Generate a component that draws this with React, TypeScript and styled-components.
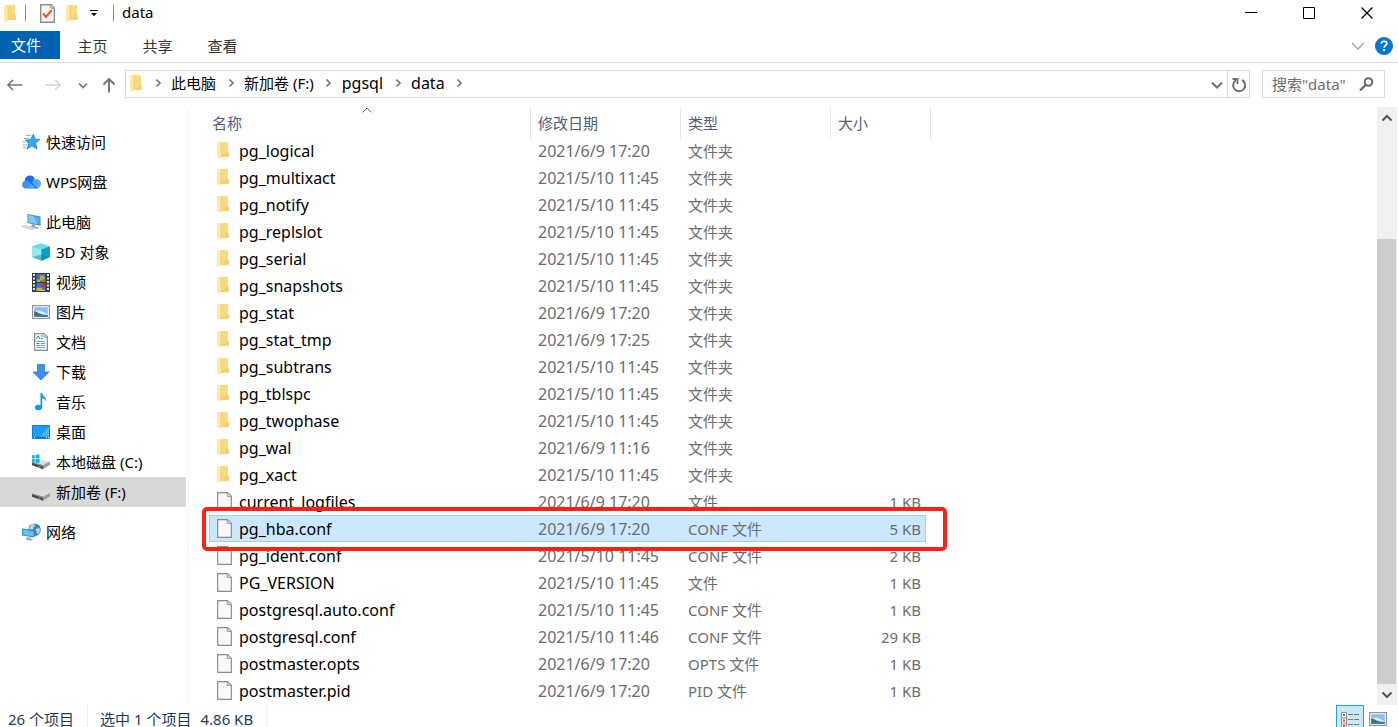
import React from "react";
import styled, { createGlobalStyle } from "styled-components";

const GlobalStyle = createGlobalStyle`
  * { box-sizing: border-box; }
  body {
    margin: 0;
    background: #fff;
    color: #000;
    font-family: "Noto Sans", "Noto Sans CJK SC", sans-serif;
    font-size: 15px;
    line-height: 20px;
    overflow: hidden;
  }
  button, input {
    font: inherit;
    color: inherit;
    background: none;
    border: 0;
    padding: 0;
    margin: 0;
  }
  a { color: inherit; text-decoration: none; }
  svg { display: block; flex: none; }
`;

const Window = styled.div`
  height: 100vh;
  display: flex;
  flex-direction: column;
`;

const TitleBar = styled.header`
  height: 31px;
  flex: none;
  display: flex;
  align-items: flex-start;
  padding-right: 2px;
`;

const QuickBar = styled.div`
  height: 26px;
  display: flex;
  align-items: center;
  padding-left: 4px;
`;

const QuickButton = styled.button<{ $width: number }>`
  width: ${(p) => p.$width}px;
  height: 24px;
  display: flex;
  align-items: center;
  justify-content: center;
`;

const BarDivider = styled.span`
  width: 1px;
  height: 16px;
  margin: 0 8px;
  background: #8c8c8c;
`;

const WindowTitle = styled.h1`
  margin: 0;
  padding-bottom: 2px;
  font-size: 15px;
  font-weight: 400;
`;

const WindowButtons = styled.div`
  display: flex;
  margin-left: auto;
`;

const WindowButton = styled.button`
  width: 58px;
  height: 25px;
  display: flex;
  align-items: center;
  justify-content: center;
`;

const Ribbon = styled.nav`
  height: 32px;
  flex: none;
  display: flex;
  align-items: flex-start;
  border-bottom: 1px solid #dadbdc;
  padding-right: 5px;
`;

const FileTab = styled.button`
  width: 60px;
  height: 28px;
  padding-right: 8px;
  background: #0063b1;
  color: #fff;
`;

const Tab = styled.button`
  width: 65px;
  height: 30px;
  color: #333;
`;

const RibbonTools = styled.div`
  margin-left: auto;
  height: 30px;
  display: flex;
  align-items: center;
  gap: 10px;
`;

const AddressRow = styled.div`
  height: 44px;
  flex: none;
  display: flex;
  align-items: flex-start;
  padding: 7px 13px 0 6px;
`;

const NavButtons = styled.div`
  height: 28px;
  width: 119px;
  flex: none;
  display: flex;
  align-items: center;
  padding-top: 2px;
`;

const NavButton = styled.button<{ $width: number }>`
  width: ${(p) => p.$width}px;
  height: 24px;
  display: flex;
  align-items: center;
`;

const AddressBox = styled.div`
  flex: 1;
  height: 28px;
  display: flex;
  align-items: stretch;
  border: 1px solid #d9d9d9;
  margin-right: 12px;
`;

const Crumbs = styled.ol`
  flex: 1;
  display: flex;
  align-items: center;
  list-style: none;
  margin: 0;
  padding: 0 0 2px 4px;
`;

const Crumb = styled.li<{ $latin?: boolean }>`
  display: flex;
  align-items: center;
  font-size: ${(p) => (p.$latin ? 16 : 15)}px;
`;

const CrumbArrow = styled.span`
  width: 28px;
  display: flex;
  justify-content: center;
  padding-left: 2px;
`;

const BoxButton = styled.button<{ $divided?: boolean }>`
  width: ${(p) => (p.$divided ? 22 : 20)}px;
  display: flex;
  align-items: center;
  justify-content: center;
  border-left: ${(p) => (p.$divided ? "1px solid #d9d9d9" : "0")};
  padding-top: 2px;
`;

const SearchBox = styled.form`
  width: 123px;
  height: 28px;
  flex: none;
  display: flex;
  align-items: center;
  border: 1px solid #d9d9d9;
  padding: 0 10px 0 9px;
`;

const SearchInput = styled.input`
  flex: 1;
  min-width: 0;
  height: 24px;
  outline: 0;
  &::placeholder { color: #6d6d6d; opacity: 1; }
`;

const Main = styled.div`
  flex: 1;
  min-height: 0;
  display: flex;
  padding-right: 1px;
`;

const Sidebar = styled.nav`
  width: 189px;
  flex: none;
  border-right: 1px solid #f3f3f3;
  padding: 20px 2px 0 0;
  display: flex;
  flex-direction: column;
  gap: 10px;
`;

const Group = styled.ul`
  list-style: none;
  margin: 0;
  padding: 0;
`;

const Place = styled.a<{ $nested?: boolean; $selected?: boolean }>`
  height: 30px;
  display: flex;
  align-items: center;
  gap: 3px;
  padding-left: ${(p) => (p.$nested ? 32 : 22)}px;
  background: ${(p) => (p.$selected ? "#d9d9d9" : "transparent")};
`;

const PlaceIcon = styled.span`
  width: 21px;
  display: flex;
`;

const ListPane = styled.main`
  flex: 1;
  min-width: 0;
  overflow: hidden;
  padding-left: 20px;
`;

const FileTable = styled.table`
  display: block;
  width: 722px;
`;

const HeadSection = styled.thead`
  display: block;
`;

const BodySection = styled.tbody`
  display: block;
  margin-right: 5px;
`;

const columns = "322px 150px 150px 1fr";

const HeadRow = styled.tr`
  display: grid;
  grid-template-columns: ${columns};
  height: 30px;
`;

const HeadCell = styled.th<{ $first?: boolean }>`
  position: relative;
  height: 32px;
  padding: 6px 0 0 ${(p) => (p.$first ? 3 : 7)}px;
  border-right: 1px solid #e5e5e5;
  text-align: left;
  font-weight: 400;
  color: #4c607a;
`;

const SortMark = styled.span`
  position: absolute;
  top: 0;
  left: 50%;
  margin-left: -8px;
`;

const FileRow = styled.tr<{ $selected?: boolean }>`
  position: relative;
  display: grid;
  grid-template-columns: ${columns};
  height: 27px;
  align-items: center;
  ${(p) =>
    p.$selected &&
    `
    z-index: 1;
    background: #cce8ff;
    outline: 1px solid #99d1ff;
    outline-offset: -1px;
    &::after {
      content: "";
      position: absolute;
      inset: -8px -21px -9px -7px;
      border: 4px solid #fc2015;
      border-radius: 5px;
    }
  `}
`;

const Cell = styled.td<{ $right?: boolean; $date?: boolean }>`
  padding: ${(p) => (p.$right ? "0 5px 0 0" : "0 0 0 7px")};
  text-align: ${(p) => (p.$right ? "right" : "left")};
  font-size: ${(p) => (p.$date ? 16 : 15)}px;
  color: #6d6d6d;
  white-space: nowrap;
`;

const NameCell = styled.td`
  display: flex;
  align-items: center;
  padding: 0 0 0 8px;
`;

const FileIcon = styled.span`
  width: 22px;
  display: flex;
`;

const FileName = styled.span`
  font-size: 16px;
`;

const ScrollBar = styled.div`
  width: 20px;
  flex: none;
  display: flex;
  flex-direction: column;
  background: #f0f0f0;
`;

const ScrollButton = styled.button`
  height: 21px;
  flex: none;
  display: flex;
  align-items: center;
  justify-content: center;
  padding-right: 1px;
`;

const ScrollTrack = styled.div`
  flex: 1;
  display: flex;
  flex-direction: column;
  justify-content: flex-end;
  padding-right: 1px;
`;

const ScrollThumb = styled.div`
  height: 80%;
  background: #cdcdcd;
`;

const StatusBar = styled.footer`
  height: 22px;
  flex: none;
  overflow: hidden;
  display: flex;
  align-items: flex-start;
  padding: 0 11px 0 8px;
  color: #1e395b;
`;

const StatusText = styled.span<{ $gap: number }>`
  padding-top: 4px;
  margin-right: ${(p) => p.$gap}px;
`;

const StatusDivider = styled.span`
  width: 1px;
  height: 22px;
  background: #f0f0f0;
  margin-right: 12px;
`;

const ViewButtons = styled.div`
  margin-left: auto;
  display: flex;
`;

const ViewButton = styled.button<{ $active?: boolean }>`
  width: ${(p) => (p.$active ? 28 : 23)}px;
  height: 28px;
  display: flex;
  align-items: flex-start;
  justify-content: ${(p) => (p.$active ? "center" : "flex-end")};
  padding-top: ${(p) => (p.$active ? 6 : 7)}px;
  background: ${(p) => (p.$active ? "#cbe8f6" : "transparent")};
  border: ${(p) => (p.$active ? "1px solid #26a0da" : "0")};
`;

const Folder = () => (
  <svg width="13" height="19" viewBox="0 0 13 19">
    <path d="M3 1h8v10.500h1V16H3z" fill="#f5d171" />
    <path d="M4 1h7v9l-7 5z" fill="#f8da80" />
    <path d="M0 1h1.500L4 3v13l-1 2-3-1.500z" fill="#ffe9a6" />
    <path d="M4 3v13" stroke="#eec35e" strokeWidth=".6" />
  </svg>
);

const Doc = () => (
  <svg width="15" height="19" viewBox="0 0 15 19">
    <path d="M.7.7h9.800l3.800 3.600v14H.7z" fill="#f9f9f9" stroke="#8b8b8b" strokeWidth="1.200" />
    <path d="M10.300.9v3.600h3.800" fill="#e4e4e4" stroke="#9a9a9a" />
  </svg>
);

const CheckDoc = () => (
  <svg width="15" height="19" viewBox="0 0 15 19">
    <path d="M.7.7h10.300l3.300 3.200v14.400H.7z" fill="#f6f6f6" stroke="#8a8f94" strokeWidth="1.400" />
    <path d="M10.700.9v3.300h3.400" fill="#ddd" stroke="#9a9a9a" />
    <path d="m3 9.500 3 3.500 5.800-7" fill="none" stroke="#f05a14" strokeWidth="2" />
  </svg>
);

type StrokeProps = { d: string; w: number; h: number; color: string; weight?: number };
const Stroke = ({ d, w, h, color, weight = 2 }: StrokeProps) => (
  <svg width={w} height={h} viewBox={`0 0 ${w} ${h}`} fill="none" stroke={color} strokeWidth={weight}>
    <path d={d} />
  </svg>
);

const CrumbChevron = () => <Stroke w={7} h={10} d="m1.500 1.500 3.500 3.500-3.500 3.500" color="#777" weight={1.700} />;

const Refresh = () => (
  <svg width="16" height="16" viewBox="0 0 16 16" fill="none" stroke="#6f6f6f" strokeWidth="2">
    <path d="M5 3.200A6 6 0 1 0 11 3" />
    <path d="M1.500 2h5v5" strokeWidth="1.800" />
  </svg>
);

const Magnifier = () => (
  <svg width="15" height="15" viewBox="0 0 15 15" fill="none" stroke="#6a6a6a" strokeWidth="2">
    <circle cx="9.500" cy="5" r="3.800" />
    <path d="M6.800 7.800 1 13.500" strokeWidth="2.300" />
  </svg>
);

const Help = () => (
  <svg width="18" height="18" viewBox="0 0 18 18">
    <circle cx="9" cy="9" r="8.600" fill="#0078d7" stroke="#1a62a8" strokeWidth=".8" />
    <path d="M6.300 6.800c0-3.400 5.500-3.300 5.500-.3 0 2-2.700 2-2.700 4.300" fill="none" stroke="#fff" strokeWidth="1.700" />
    <circle cx="9.100" cy="13.200" r="1.100" fill="#fff" />
  </svg>
);

const Picture = () => (
  <svg width="18" height="14" viewBox="0 0 18 14">
    <path d="M.6.6h16.800v12.800H.6z" fill="#fff" stroke="#969696" strokeWidth="1.200" />
    <path d="M2.200 2.200h13.600v9.600H2.200z" fill="#86bdf0" />
    <path d="M2.200 7c4-3 7-1 13.600 2v1H2.200z" fill="#dcecf7" />
    <path d="M2.200 6.200c3 .2 4.500 2.500 8.500 3.200l5.100.5v1.900H2.200z" fill="#3f7168" />
    <path d="M2.200 10.500h13.600v1.300H2.200z" fill="#3a83b5" />
  </svg>
);

const DriveBody = () => (
  <>
    <path d="m0 4.500 5.500-2.700L18 4l-7 4.200z" fill="#dedede" />
    <path d="m0 4.500 11 3.200v4L0 7.800z" fill="#4a4a4a" />
    <path d="m0 4.500 11 3.200v1L0 5.300z" fill="#a8a8a8" />
    <path d="m11 7.700 7-3.700v3.200l-7 4.500z" fill="#9b9b9b" />
    <path d="m6.500 9 2 .7" stroke="#46d34a" strokeWidth="1.300" />
  </>
);

const icons: Record<string, React.ReactNode> = {
  star: (
    <svg width="19" height="18" viewBox="1 0 19 18">
      <path d="m12.500 1 1.200 5.200 5.400.2-4.400 3.400 1.200 6.200-4.800-3.200L6 16l2-5.400-3.500-3.400 5-.6z" fill="#33a9ee" stroke="#1b7fc9" strokeWidth=".8" />
      <path d="M5 2.500h5M3 5.500h5M1 9h4M2 12h4M2 14.500h3" stroke="#74bdec" />
    </svg>
  ),
  cloud: (
    <svg width="19" height="14" viewBox="0 0 19 14">
      <path d="M3 6.200C2 1 9.500-2 12.500 3l-2 9H2z" fill="#1c6df0" />
      <path d="M3.800 13.500a3.900 3.900 0 0 1 .4-7.800c4-.6 5.500 3.500 9.800 7.800z" fill="#3f93fb" />
      <path d="M6 13.500C9.500 12 9.500 4 14 4a4.700 4.700 0 0 1 .5 9.500z" fill="#5aa9ff" />
      <path d="M7.300 6.200c2.500 1.500 4 5 7.700 6.800" fill="none" stroke="#1c6df0" strokeWidth="1.200" />
    </svg>
  ),
  computer: (
    <svg width="19" height="18" viewBox="1 0 19 18">
      <path d="m6.500 1 13 2.500v9.200L6.500 10z" fill="#4d7f9f" />
      <path d="m7.300 2 11.400 2.200v7.400L7.300 9.200z" fill="#4fb2f0" />
      <path d="m7.300 2 5 1 4 8.200-9-2z" fill="#80c9f6" />
      <path d="m11 11 3 .6v2l4 1-2 1.400-6-1.500z" fill="#9aa3ab" />
      <path d="m1 13.500 4-1 9.500 2.500-3.500 2z" fill="#dcdfe1" stroke="#b9bdc1" strokeWidth=".6" />
    </svg>
  ),
  cube: (
    <svg width="18" height="18" viewBox="0 0 18 18">
      <path d="m9 .5 9 3v10.500l-8.500 3.800L0 14V3.500z" fill="#39bcd4" />
      <path d="m9 .5 9 3-8.500 3L0 3.500z" fill="#6ddbe6" />
      <path d="M0 3.500 9.500 6.500v11.300L0 14z" fill="#9ee7ef" />
      <path d="M9.500 6.500 18 3.500V14l-8.500 3.800z" fill="#07a2c0" />
      <path d="m9.500 11.500 8.500 2.500-8.500 3.800L0 14z" fill="#08839f" opacity=".45" />
    </svg>
  ),
  video: (
    <svg width="18" height="19" viewBox="0 0 18 19">
      <path d="M0 0h18v19H0z" fill="#3a3a3a" />
      <path d="M2 1v17M16 1v17" stroke="#e6e6e6" strokeWidth="2" strokeDasharray="2 1.500" />
      <path d="M4.500 1h9v8h-9zM4.500 10h9v8h-9z" fill="#3f6fdc" />
      <path d="M5 6.500h3V9H5zM8 3l3-1 2 3-2 2.500H8z" fill="#d9a720" />
      <path d="m9 11 4-1v3l-2 2z" fill="#cb3123" />
      <path d="M4.500 14.500 9 15l4.500 3h-9z" fill="#d7b52e" />
      <path d="M10 6.500h3.500V9H10z" fill="#4f9c35" />
    </svg>
  ),
  picture: <Picture />,
  document: (
    <svg width="18" height="18" viewBox="0 0 18 18">
      <path d="M2.600.6h9.500l3.300 3.200v13.600H2.600z" fill="#fafafa" stroke="#8c8c8c" strokeWidth="1.200" />
      <path d="M12 .8V4h3.200" fill="#ddd" stroke="#999" />
      <path d="m4.500 6 1.200-3h1l1 3M8.800 3h2.200M8.800 5.500h2.200" fill="none" stroke="#2b8ac6" />
      <path d="M4.500 8.500h9M8.500 10.500h5M8.500 12.500h5M4.500 14.500h9" stroke="#6faeda" />
      <path d="M4.500 10.500h3M4.500 12.500h3" stroke="#777" />
    </svg>
  ),
  download: (
    <svg width="18" height="18" viewBox="0 0 18 18">
      <path d="M5.500 1.500h7v7.500H17l-8 8-8-8h4.500z" fill="#3a93e6" stroke="#2b7cc9" strokeWidth=".8" />
    </svg>
  ),
  music: (
    <svg width="18" height="18" viewBox="0 0 18 18">
      <ellipse cx="6.500" cy="14.500" rx="3.600" ry="2.700" fill="#0a9bf0" />
      <path d="M8.500 0h1.700c.3 3.500 4.800 4.300 3.800 9-.3-2.300-2-3.400-3.800-3.700v9H8.500z" fill="#0a9bf0" />
    </svg>
  ),
  desktop: (
    <svg width="18" height="14" viewBox="0 0 18 14">
      <path d="M.5.500h17v13H.5z" fill="#1c9dfb" stroke="#0a7fdc" />
      <path d="M17 1v10L8 12z" fill="#49b3ff" />
      <path d="M1 12.500h16" stroke="#0b6fc0" />
      <path d="M2 12.500h1M14 12.500h1M16 12.500h1" stroke="#fff" />
    </svg>
  ),
  system: (
    <svg width="20" height="16" viewBox="1 0 20 16">
      <g transform="translate(1 3.500)"><DriveBody /></g>
      <path d="M0 1.500 3.700 1v3.200H0zM4.600.9 8.500.300v3.900H4.600zM0 5h3.700v3.300L0 7.900zM4.600 5h3.900v3.900l-3.900-.5z" fill="#10b1ea" />
    </svg>
  ),
  drive: (
    <svg width="18" height="12" viewBox="0 -3 18 12" overflow="visible">
      <DriveBody />
    </svg>
  ),
  network: (
    <svg width="19" height="18" viewBox="0 0 19 18">
      <circle cx="12.500" cy="6.800" r="6.300" fill="#4187b5" />
      <path d="M9 2c2-1.500 4-1 4 .5s-2 1-2 3-3 1-4 0zM13.500 6l4-1c1 3 0 5-2 6.500z" fill="#b5d4e2" />
      <path d="m0 5.500 12.500 2v7L0 12.500z" fill="#2586cb" />
      <path d="m.8 6.500 10.900 1.800v5.200L.8 11.800z" fill="#64c0f6" />
      <path d="m5 14 4 .6.500 1.500 2 .9-4 .8-4-1.200z" fill="#a9b0b5" />
    </svg>
  ),
};

type PlaceItem = { icon: string; label: string; nested?: boolean; selected?: boolean };

const places: PlaceItem[][] = [
  [{ icon: "star", label: "快速访问" }],
  [{ icon: "cloud", label: "WPS网盘" }],
  [
    { icon: "computer", label: "此电脑" },
    { icon: "cube", label: "3D 对象", nested: true },
    { icon: "video", label: "视频", nested: true },
    { icon: "picture", label: "图片", nested: true },
    { icon: "document", label: "文档", nested: true },
    { icon: "download", label: "下载", nested: true },
    { icon: "music", label: "音乐", nested: true },
    { icon: "desktop", label: "桌面", nested: true },
    { icon: "system", label: "本地磁盘 (C:)", nested: true },
    { icon: "drive", label: "新加卷 (F:)", nested: true, selected: true },
  ],
  [{ icon: "network", label: "网络" }],
];

const crumbs = [
  { label: "此电脑" },
  { label: "新加卷 (F:)" },
  { label: "pgsql", latin: true },
  { label: "data", latin: true },
];

const files: [string, string, string, string][] = [
  ["pg_logical", "2021/6/9 17:20", "文件夹", ""],
  ["pg_multixact", "2021/5/10 11:45", "文件夹", ""],
  ["pg_notify", "2021/5/10 11:45", "文件夹", ""],
  ["pg_replslot", "2021/5/10 11:45", "文件夹", ""],
  ["pg_serial", "2021/5/10 11:45", "文件夹", ""],
  ["pg_snapshots", "2021/5/10 11:45", "文件夹", ""],
  ["pg_stat", "2021/6/9 17:20", "文件夹", ""],
  ["pg_stat_tmp", "2021/6/9 17:25", "文件夹", ""],
  ["pg_subtrans", "2021/5/10 11:45", "文件夹", ""],
  ["pg_tblspc", "2021/5/10 11:45", "文件夹", ""],
  ["pg_twophase", "2021/5/10 11:45", "文件夹", ""],
  ["pg_wal", "2021/6/9 11:16", "文件夹", ""],
  ["pg_xact", "2021/5/10 11:45", "文件夹", ""],
  ["current_logfiles", "2021/6/9 17:20", "文件", "1 KB"],
  ["pg_hba.conf", "2021/6/9 17:20", "CONF 文件", "5 KB"],
  ["pg_ident.conf", "2021/5/10 11:45", "CONF 文件", "2 KB"],
  ["PG_VERSION", "2021/5/10 11:45", "文件", "1 KB"],
  ["postgresql.auto.conf", "2021/5/10 11:45", "CONF 文件", "1 KB"],
  ["postgresql.conf", "2021/5/10 11:46", "CONF 文件", "29 KB"],
  ["postmaster.opts", "2021/6/9 17:20", "OPTS 文件", "1 KB"],
  ["postmaster.pid", "2021/6/9 17:20", "PID 文件", "1 KB"],
];

export default function App() {
  return (
    <Window>
      <GlobalStyle />
      <TitleBar>
        <QuickBar>
          <Folder />
          <BarDivider />
          <QuickButton $width={27} aria-label="属性"><CheckDoc /></QuickButton>
          <QuickButton $width={22} aria-label="新建文件夹"><Folder /></QuickButton>
          <QuickButton $width={22} aria-label="自定义快速访问工具栏">
            <svg width="8" height="8" viewBox="0 0 8 8">
              <path d="M0 1h8v1H0zM1 4h6L4 7.200z" fill="#111" />
            </svg>
          </QuickButton>
          <BarDivider />
          <WindowTitle>data</WindowTitle>
        </QuickBar>
        <WindowButtons>
          <WindowButton aria-label="最小化"><Stroke w={12} h={12} d="M0 5.500h12" color="#000" weight={1} /></WindowButton>
          <WindowButton aria-label="最大化"><Stroke w={12} h={12} d="M.5.500h11v11H.5z" color="#000" weight={1} /></WindowButton>
          <WindowButton aria-label="关闭"><Stroke w={12} h={12} d="m.5.500 11 11M11.500.500l-11 11" color="#000" weight={1.200} /></WindowButton>
        </WindowButtons>
      </TitleBar>

      <Ribbon>
        <FileTab>文件</FileTab>
        <Tab>主页</Tab>
        <Tab>共享</Tab>
        <Tab>查看</Tab>
        <RibbonTools>
          <button aria-label="展开功能区"><Stroke w={14} h={8} d="m1 1 6 6 6-6" color="#a0a0a0" weight={1.300} /></button>
          <button aria-label="帮助"><Help /></button>
        </RibbonTools>
      </Ribbon>

      <AddressRow>
        <NavButtons>
          <NavButton $width={39} aria-label="后退"><Stroke w={17} h={12} d="M2 6h14.500M7 1 2 6l5 5" color="#777" weight={1.700} /></NavButton>
          <NavButton $width={33} aria-label="前进"><Stroke w={17} h={12} d="M.5 6H15M10 1l5 5-5 5" color="#d5d5d5" weight={1.700} /></NavButton>
          <NavButton $width={24} aria-label="最近浏览的位置"><Stroke w={10} h={7} d="m1 1.500 4 4 4-4" color="#777" weight={1.700} /></NavButton>
          <NavButton $width={20} aria-label="上移"><Stroke w={14} h={16} d="M7 15.500V2M1.500 7.500 7 2l5.500 5.500" color="#777" weight={2} /></NavButton>
        </NavButtons>
        <AddressBox>
          <Crumbs>
            <Crumb><Folder /><CrumbArrow><CrumbChevron /></CrumbArrow></Crumb>
            {crumbs.map((c) => (
              <Crumb key={c.label} $latin={c.latin}>
                <a href="#path">{c.label}</a>
                <CrumbArrow><CrumbChevron /></CrumbArrow>
              </Crumb>
            ))}
          </Crumbs>
          <BoxButton aria-label="以前的位置"><Stroke w={12} h={8} d="m1 1.500 5 5 5-5" color="#6f6f6f" /></BoxButton>
          <BoxButton $divided aria-label="刷新"><Refresh /></BoxButton>
        </AddressBox>
        <SearchBox>
          <SearchInput aria-label="搜索" placeholder={'搜索"data"'} />
          <Magnifier />
        </SearchBox>
      </AddressRow>

      <Main>
        <Sidebar>
          {places.map((group) => (
            <Group key={group[0].label}>
              {group.map((p) => (
                <li key={p.label}>
                  <Place href="#place" $nested={p.nested} $selected={p.selected}>
                    <PlaceIcon>{icons[p.icon]}</PlaceIcon>
                    {p.label}
                  </Place>
                </li>
              ))}
            </Group>
          ))}
        </Sidebar>
        <ListPane>
          <FileTable>
            <HeadSection>
              <HeadRow>
                <HeadCell $first>
                  名称
                  <SortMark><Stroke w={10} h={7} d="m.5 5.500 4.500-4.500 4.500 4.500" color="#666" weight={1} /></SortMark>
                </HeadCell>
                <HeadCell>修改日期</HeadCell>
                <HeadCell>类型</HeadCell>
                <HeadCell>大小</HeadCell>
              </HeadRow>
            </HeadSection>
            <BodySection>
              {files.map(([name, date, type, size]) => (
                <FileRow key={name} $selected={name === "pg_hba.conf"}>
                  <NameCell>
                    <FileIcon>{type === "文件夹" ? <Folder /> : <Doc />}</FileIcon>
                    <FileName>{name}</FileName>
                  </NameCell>
                  <Cell $date>{date}</Cell>
                  <Cell>{type}</Cell>
                  <Cell $right>{size}</Cell>
                </FileRow>
              ))}
            </BodySection>
          </FileTable>
        </ListPane>
        <ScrollBar>
          <ScrollButton aria-label="向上滚动"><Stroke w={12} h={8} d="m1.500 6.500 4.500-4.500 4.500 4.500" color="#555" weight={2} /></ScrollButton>
          <ScrollTrack><ScrollThumb /></ScrollTrack>
          <ScrollButton aria-label="向下滚动"><Stroke w={12} h={8} d="m1.500 1.500 4.500 4.500 4.500-4.500" color="#555" weight={2} /></ScrollButton>
        </ScrollBar>
      </Main>

      <StatusBar>
        <StatusText $gap={13}>26 个项目</StatusText>
        <StatusDivider />
        <StatusText $gap={9}>选中 1 个项目</StatusText>
        <StatusText $gap={13}>4.86 KB</StatusText>
        <StatusDivider />
        <ViewButtons>
          <ViewButton $active aria-label="详细信息">
            <svg width="18" height="18" viewBox="0 0 18 18">
              <path d="M.5.500h5v16h-5zM.5 6h5M.5 11h5" fill="#fff" stroke="#8e8e8e" />
              <path d="M2 2h2v2H2z" fill="#3b79b8" />
              <path d="M2 7.500h2v2H2z" fill="#b0683c" />
              <path d="M2 12.500h2v2H2z" fill="#c22a1d" />
              <path d="M7 2.500h5M13 2.500h5M7 7.500h5M13 7.500h5M7 12.500h5M13 12.500h5" stroke="#777" />
            </svg>
          </ViewButton>
          <ViewButton aria-label="大图标"><Picture /></ViewButton>
        </ViewButtons>
      </StatusBar>
    </Window>
  );
}
